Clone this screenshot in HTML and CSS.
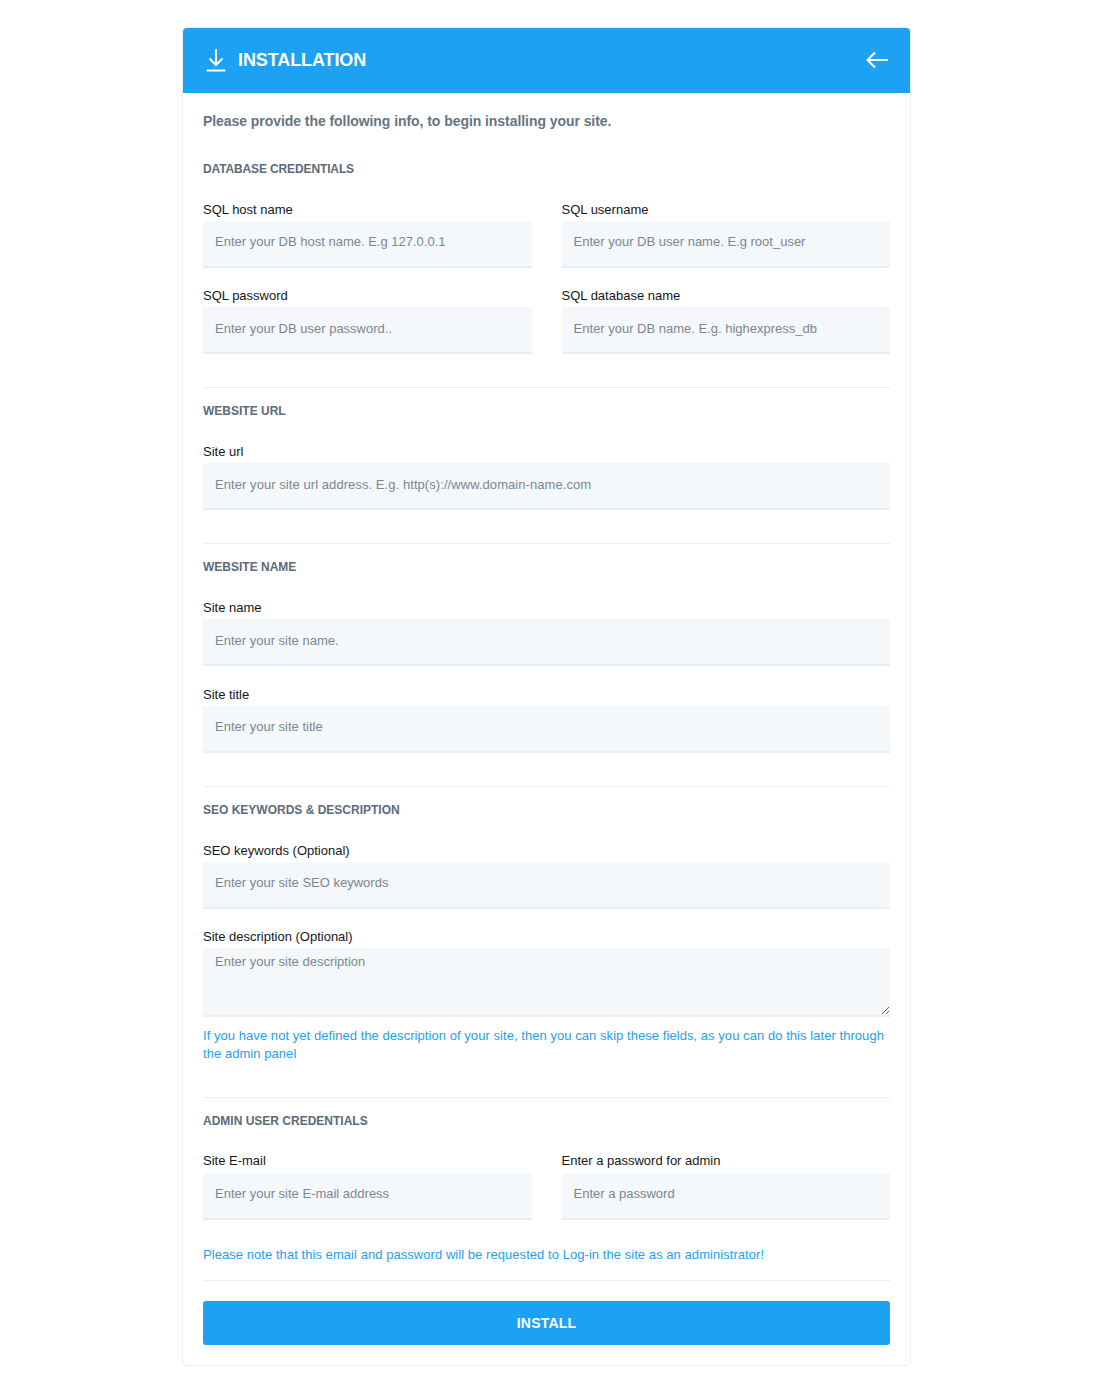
FILE: index.html
```html
<!DOCTYPE html>
<html lang="en">
<head>
<meta charset="utf-8">
<title>Installation</title>
<link rel="stylesheet" href="styles.css">
</head>
<body>
<main class="card">
  <header class="card-head">
    <div class="title">
      <svg class="icon-dl" width="22" height="24" viewBox="0 0 22 24" fill="none" stroke="#fff" stroke-width="2"><path d="M11 1v15"/><path d="M4.500 10.500 11 17l6.500-6.500"/><path d="M1.500 22.500h19"/></svg>
      <span>INSTALLATION</span>
    </div>
    <svg class="icon-back" width="24" height="18" viewBox="0 0 24 18" fill="none" stroke="#fff" stroke-width="2"><path d="M23 9H3"/><path d="M10 1.500 2.500 9l7.500 7.500"/></svg>
  </header>
  <form class="card-body">
    <p class="intro">Please provide the following info, to begin installing your site.</p>

    <section class="sec sec-db">
      <h2>DATABASE CREDENTIALS</h2>
      <div class="grid">
        <div class="field"><label>SQL host name</label><input placeholder="Enter your DB host name. E.g 127.0.0.1"></div>
        <div class="field"><label>SQL username</label><input placeholder="Enter your DB user name. E.g root_user"></div>
        <div class="field"><label>SQL password</label><input placeholder="Enter your DB user password.."></div>
        <div class="field"><label>SQL database name</label><input placeholder="Enter your DB name. E.g. highexpress_db"></div>
      </div>
    </section>

    <section class="sec">
      <h2>WEBSITE URL</h2>
      <div class="field"><label>Site url</label><input class="wide" placeholder="Enter your site url address. E.g. http(s)://www.domain-name.com"></div>
    </section>

    <section class="sec">
      <h2>WEBSITE NAME</h2>
      <div class="field"><label>Site name</label><input placeholder="Enter your site name."></div>
      <div class="field"><label>Site title</label><input placeholder="Enter your site title"></div>
    </section>

    <section class="sec">
      <h2>SEO KEYWORDS &amp; DESCRIPTION</h2>
      <div class="field"><label>SEO keywords (Optional)</label><input placeholder="Enter your site SEO keywords"></div>
      <div class="field tight"><label>Site description (Optional)</label><textarea placeholder="Enter your site description"></textarea></div>
      <p class="note wrap">If you have not yet defined the description of your site, then you can skip these fields, as you can do this later through the admin panel</p>
    </section>

    <section class="sec sec-admin">
      <h2>ADMIN USER CREDENTIALS</h2>
      <div class="grid">
        <div class="field"><label>Site E-mail</label><input placeholder="Enter your site E-mail address"></div>
        <div class="field"><label>Enter a password for admin</label><input placeholder="Enter a password"></div>
      </div>
      <p class="note last">Please note that this email and password will be requested to Log-in the site as an administrator!</p>
    </section>

    <div class="foot"><button type="button" class="install">INSTALL</button></div>
  </form>
</main>
</body>
</html>
```
FILE: styles.css
```css
* { box-sizing: border-box; }
html, body { margin: 0; padding: 0; background: #fff; }
body { font-family: "Liberation Sans", Arial, sans-serif; color: #14171a; padding: 27px 0 18px; }
.card { width: 729px; margin: 0 0 0 182px; border: 1px solid #e9eef3; border-radius: 5px; overflow: hidden; }
.card-head { height: 65px; background: #1da1f2; color: #fff; display: flex; align-items: center; justify-content: space-between; padding: 0 21px 2px 22px; }
.title { display: flex; align-items: center; gap: 11px; font-size: 18px; font-weight: 700; letter-spacing: -.1px; }
.title span { position: relative; top: 1px; }
.icon-dl { display: block; }
.icon-back { display: block; }
.card-body { padding: 0 20px 20px; }
.intro { margin: 0; padding-top: 18.5px; height: 60.9px; font-size: 14px; line-height: 18px; font-weight: 700; color: #66757f; letter-spacing: -.06px; }
.sec { border-top: 1px solid #e9eef3; padding-top: 15px; padding-bottom: 12.5px; }
.intro + .sec { border-top: 0; padding-top: 7px; padding-bottom: 11.5px; }
h2 { margin: 0 0 25px; font-size: 12px; line-height: 16px; font-weight: 700; color: #5b6b79; }
.sec-db { margin-bottom: .5px; }
.sec-db h2 { letter-spacing: -.13px; }
.sec-admin h2 { margin-bottom: 24px; }
.grid { display: grid; grid-template-columns: 1fr 1fr; column-gap: 30px; margin-bottom: .5px; }
.field { display: block; height: 86.5px; }
.field label { display: block; font-size: 13px; line-height: 16px; height: 19px; color: #14171a; }
.sec-admin .field label { height: 19.5px; }
input, textarea { display: block; width: 100%; background: #f5f8fa; border: 0; border-bottom: 2px solid #e9eef3; padding: 0 12px; font: 13px "Liberation Sans", Arial, sans-serif; color: #14171a; outline: 0; border-radius: 0; }
input { height: 47px; padding-bottom: 3px; }
input.wide { letter-spacing: .065px; }
textarea { height: 69px; padding-top: 6px; resize: vertical; }
::placeholder { color: #7a8791; opacity: 1; }
.tight { height: 87.5px; }
.note { margin: 0; font-size: 13px; line-height: 18px; color: #1da1f2; letter-spacing: .055px; }
.wrap { margin-top: 10px; padding-bottom: 22px; }
.last { margin-top: 6px; padding-bottom: 3.5px; }
.foot { border-top: 1px solid #e9eef3; padding-top: 20px; }
.install { display: block; width: 100%; height: 44px; border: 0; border-radius: 3px; background: #1da1f2; color: #fff; font: 700 14px "Liberation Sans", Arial, sans-serif; letter-spacing: .2px; }
```
